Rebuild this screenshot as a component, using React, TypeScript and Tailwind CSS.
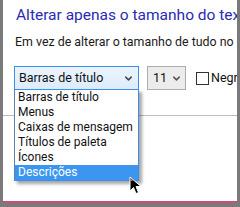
import { ChevronDown } from "lucide-react";

const items = ["Barras de título", "Menus", "Caixas de mensagem", "Títulos de paleta", "Ícones", "Descrições"];

export default function App() {
    return (
        <div className="w-[240px] h-[207px] bg-[#7a7a7a] overflow-hidden" style={{ fontFamily: 'Roboto, "Noto Sans", sans-serif' }}>
            <div className="relative mx-[3px] h-[203px] bg-white border-b-2 border-[#d4497a] overflow-hidden">
                {/* heading */}
                <h1 className="pl-[13px] pt-[5px] text-[15.5px] leading-[20px] text-[#2a2ab4] whitespace-nowrap">
                    Alterar apenas o tamanho do texto
                </h1>
                <p className="pl-[12px] mt-[9px] text-[12.4px] leading-[16px] text-[#1a1a1a] whitespace-nowrap">
                    Em vez de alterar o tamanho de tudo no ecrã
                </p>

                {/* combos row */}
                <div className="flex items-center mt-[16px] pl-[11px] h-[24px]">
                    <div className="shrink-0 w-[125px] h-[24px] flex items-center justify-between border border-[#3c8fe6] bg-gradient-to-b from-[#ecf4fc] to-[#dcecfc] pl-[4px] pr-[4px]">
                        <span className="text-[12.5px] text-[#111]">Barras de título</span>
                        <ChevronDown size={11} strokeWidth={3.2} className="text-[#444]" />
                    </div>
                    <div className="shrink-0 ml-[8px] w-[39px] h-[24px] flex items-center justify-between border border-[#acacac] bg-[#ececec] pl-[5px] pr-[3px]">
                        <span className="text-[12.5px] text-[#111]">11</span>
                        <ChevronDown size={11} strokeWidth={3.2} className="text-[#555]" />
                    </div>
                    <div className="shrink-0 ml-[10px] w-[13px] h-[13px] border border-[#333] bg-white" />
                    <span className="ml-[2px] text-[12.5px] text-[#111] whitespace-nowrap">Negrito</span>
                </div>

                {/* separator */}
                <div className="mt-[25px] h-px bg-[#bdbdbd]" />

                {/* open dropdown list */}
                <div className="absolute left-[11px] top-[89px] w-[125px] border border-[#3c8fe6] border-l-[#5a7fb0] bg-white shadow-[3px_3px_3px_rgba(0,0,0,0.35)]">
                    {items.map((item, i) => (
                        <div
                            key={item}
                            className={
                                i === items.length - 1
                                    ? "h-[15px] leading-[15px] pl-[3px] text-[12px] whitespace-nowrap bg-[#3c96f0] text-white"
                                    : "h-[15px] leading-[15px] pl-[3px] text-[12px] whitespace-nowrap text-[#111]"
                            }
                        >
                            {item}
                        </div>
                    ))}
                </div>

                {/* mouse pointer */}
                <svg className="absolute left-[126px] top-[176px]" width="14" height="20" viewBox="0 0 14 20">
                    <path d="M1 1 L1 15 L4.5 11.5 L7 17.5 L9.5 16.5 L7 10.5 L12 10.5 Z" fill="#000" stroke="#fff" strokeWidth="1" />
                    <path d="M1.5 2 L1.5 5 L4 5 Z" fill="#e8761e" />
                </svg>
            </div>
        </div>
    );
}
